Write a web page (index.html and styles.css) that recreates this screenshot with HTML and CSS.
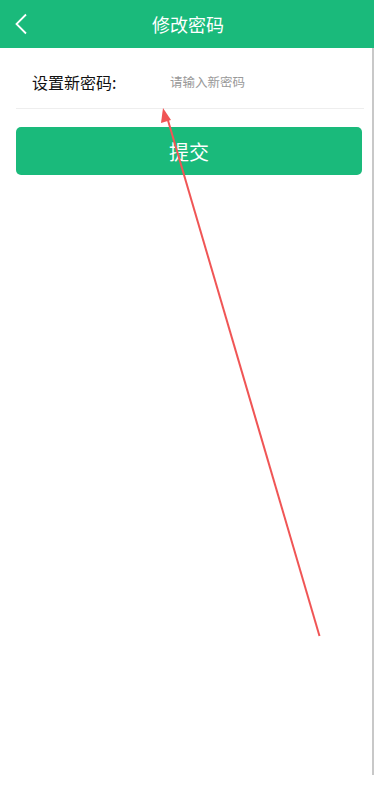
FILE: index.html
```html
<!DOCTYPE html>
<html lang="zh">
<head>
<meta charset="utf-8">
<link rel="stylesheet" href="styles.css">
</head>
<body>
<div class="page">
  <header class="topbar">
    <span class="back">
      <svg width="14" height="22" viewBox="0 0 14 22"><path d="M12 1.5 L2.5 11 L12 20.5" fill="none" stroke="#fff" stroke-width="1.8"/></svg>
    </span>
    <h1 class="title">修改密码</h1>
  </header>
  <main class="content">
    <div class="form-row">
      <label class="label">设置新密码:</label>
      <span class="placeholder">请输入新密码</span>
    </div>
    <button class="submit">提交</button>
  </main>
  <div class="scrollline"></div>
  <svg class="arrow" width="374" height="802" viewBox="0 0 374 802">
    <path d="M319.5 636 L167 117" stroke="#f05555" stroke-width="2" fill="none"/>
    <path d="M163 108 L161 123 L171 120 Z" fill="#f05555"/>
  </svg>
</div>
</body>
</html>
```
FILE: styles.css
```css
html, body {
  margin: 0;
  padding: 0;
  background: #fff;
}
body {
  font-family: "Noto Sans CJK SC", "Noto Sans", sans-serif;
}
.page {
  position: relative;
  width: 374px;
  height: 802px;
  overflow: hidden;
}
.topbar {
  height: 48px;
  background: #1aba7b;
  display: flex;
  align-items: center;
  justify-content: center;
  position: relative;
}
.back {
  position: absolute;
  left: 14px;
  top: 13px;
  display: flex;
}
.title {
  margin: 0;
  color: #fff;
  font-size: 18px;
  font-weight: normal;
  line-height: 48px;
  margin-left: 2px;
}
.content {
  padding: 0 12px 0 16px;
}
.form-row {
  height: 61px;
  box-sizing: border-box;
  padding-top: 7px;
  display: flex;
  align-items: center;
  border-bottom: 1px solid #eeeeee;
  margin-right: -2px;
}
.label {
  margin-left: 16px;
  width: 138px;
  font-size: 16px;
  color: #111;
}
.placeholder {
  font-size: 12.5px;
  color: #999;
}
.submit {
  display: block;
  margin-top: 18px;
  width: 346px;
  height: 48px;
  border: none;
  border-radius: 5px;
  background: #1aba7b;
  color: #fff;
  font-family: "Noto Sans CJK SC", sans-serif;
  font-size: 20px;
  padding: 0;
}
.scrollline {
  position: absolute;
  left: 372px;
  top: 48px;
  width: 1.5px;
  height: 727px;
  background: #c8c8c8;
}
.arrow {
  position: absolute;
  left: 0;
  top: 0;
  pointer-events: none;
}
```
